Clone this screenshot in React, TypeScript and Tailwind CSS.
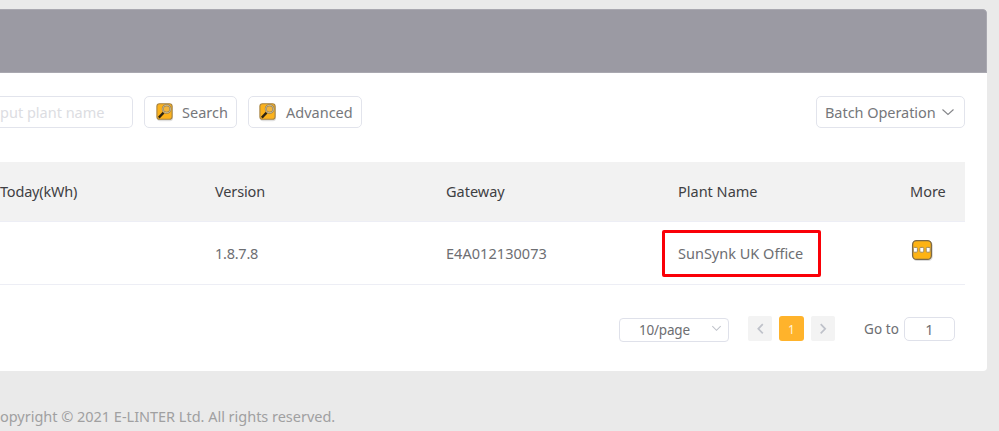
import type { ReactNode } from "react";

function Chevron({ className, d, width = 1.1 }: { className: string; d: string; width?: number }) {
  return (
    <svg viewBox="0 0 14 14" className={className} fill="none" stroke="currentColor" strokeWidth={width}>
      <path d={d} />
    </svg>
  );
}

function SearchIcon() {
  return (
    <svg viewBox="0 0 20 20" className="h-5 w-5 shrink-0">
      <rect x="2" y="2.6" width="16" height="16.6" rx="3.2" fill="#000" opacity=".12" />
      <rect x="1.9" y="1.7" width="15.2" height="15.6" rx="2.6" fill="#fcb21c" stroke="#a58345" strokeWidth="1.1" />
      <path d="M3.8 15.6L8.6 10.6" stroke="#2e2512" strokeWidth="2.3" />
      <circle cx="11.6" cy="7" r="3.8" fill="#f3b53c" stroke="#8d7b56" strokeWidth="2" />
      <circle cx="11.6" cy="7" r="3.8" fill="none" stroke="#c9b88f" strokeWidth="1.1" />
    </svg>
  );
}

function MoreIcon() {
  return (
    <svg viewBox="0 0 24 24" className="h-6 w-6">
      <rect x="2.5" y="2.8" width="20.3" height="20.3" rx="4.5" fill="#000" opacity=".14" />
      <rect x="2.6" y="2.6" width="18.8" height="18.8" rx="4" fill="#fdb314" stroke="#7c6a48" strokeWidth="1.3" />
      <g fill="#fff" stroke="#a18958" strokeWidth="1">
        <rect x="3.4" y="9.4" width="4" height="4.8" rx="1" />
        <rect x="9.8" y="9.4" width="4" height="4.8" rx="1" />
        <rect x="16.2" y="9.4" width="4" height="4.8" rx="1" />
      </g>
    </svg>
  );
}

function Button({ className, children }: { className: string; children: ReactNode }) {
  return (
    <button className={`flex h-8 items-center rounded-[5px] border border-[#e2e4ec] bg-white text-[#76777b] ${className}`}>
      {children}
    </button>
  );
}

const row = "grid w-[965px] grid-cols-[215px_231px_232px_232px_55px] items-center border-b border-[#edeef5]";

export default function App() {
  return (
    <div className="h-[431px] w-[999px] overflow-hidden bg-[#eaeaea] pt-[9px] font-['Noto_Sans','Open_Sans',sans-serif] text-[14.5px] leading-5 whitespace-nowrap">
      <main className="h-[362px] w-[987px] overflow-hidden rounded-r-[4px] bg-white">
        <header className="h-16 rounded-tr-[4px] border border-l-0 border-[#a9a8b0] bg-[#9b9aa3]" />
        <div className="flex h-[89px] items-start pt-[23px]">
          <div className="flex h-8 w-[133px] items-center rounded-r-[5px] border border-l-0 border-[#e2e4ec] text-[#dcdde2]">
            <span>put plant name</span>
          </div>
          <Button className="ml-[11px] w-[93px] pl-[10px]">
            <SearchIcon />
            <span className="ml-[7px]">Search</span>
          </Button>
          <Button className="ml-[11px] w-[114px] pl-[9px]">
            <SearchIcon />
            <span className="ml-[8px]">Advanced</span>
          </Button>
          <Button className="ml-[454px] w-[149px] pl-2">
            <span className="tracking-[-0.05px]">Batch Operation</span>
            <Chevron className="mr-[9px] ml-auto h-[14px] w-[14px] text-[#85868a]" d="M1.5 4.5L7 9.5l5.5-5" />
          </Button>
        </div>
        <div className={`${row} h-[60px] bg-[#f2f2f2] pb-px text-[#3f4043]`}>
          <span className="tracking-[-0.2px]">Today(kWh)</span>
          <span className="tracking-[-0.15px]">Version</span>
          <span>Gateway</span>
          <span>Plant Name</span>
          <span>More</span>
        </div>
        <div className={`${row} h-[63px] text-[#6d6e72]`}>
          <span />
          <span className="tracking-[-0.25px]">1.8.7.8</span>
          <span className="tracking-[0.05px]">E4A012130073</span>
          <span className="-ml-4 flex h-[47px] w-[159px] items-center rounded-[2px] border-[3px] border-[#fa0007] pl-[13px]">SunSynk UK Office</span>
          <span className="-mt-[6px]"><MoreIcon /></span>
        </div>
        <div className="flex items-start pt-[31px] pl-[619px] text-[#6d6e72]">
          <div className="mt-[2px] flex h-6 w-[110px] items-center rounded-[4px] border border-[#dfe1ea] pl-[19px] text-[13.5px]">
            <span className="tracking-[-0.2px]">10/page</span>
            <Chevron className="mr-[5px] ml-auto h-[13px] w-[13px] -translate-y-[2px] text-[#bfc2ca]" d="M2.5 4.5L7 9l4.5-4.5" />
          </div>
          <button className="ml-[19px] flex h-[25px] w-6 items-center justify-center rounded-[2px] bg-[#f3f3f3] text-[#bfc2ca]">
            <Chevron className="h-[14px] w-[14px]" d="M9.8 2.2L5.3 6.8l4.5 4.6" width={1.7} />
          </button>
          <button className="ml-[7px] flex h-[25px] w-[25px] items-center justify-center rounded-[3px] bg-[#ffb32b] pt-[2px] text-[12px] text-[#fff4dc]">1</button>
          <button className="ml-[7px] flex h-[25px] w-6 items-center justify-center rounded-[2px] bg-[#f3f3f3] text-[#bfc2ca]">
            <Chevron className="h-[14px] w-[14px]" d="M4.7 2.2L9.2 6.8l-4.5 4.6" width={1.7} />
          </button>
          <span className="mt-[3px] ml-[29px] w-10 text-[13.5px] tracking-[0.1px]">Go to</span>
          <div className="mt-[1px] flex h-6 w-[51px] items-center justify-center rounded-[5px] border border-[#dfe1ea]">1</div>
        </div>
      </main>
      <footer className="mt-[35px] tracking-[-0.02px] text-[#a0a0a1]">opyright © 2021 E-LINTER Ltd. All rights reserved.</footer>
    </div>
  );
}
